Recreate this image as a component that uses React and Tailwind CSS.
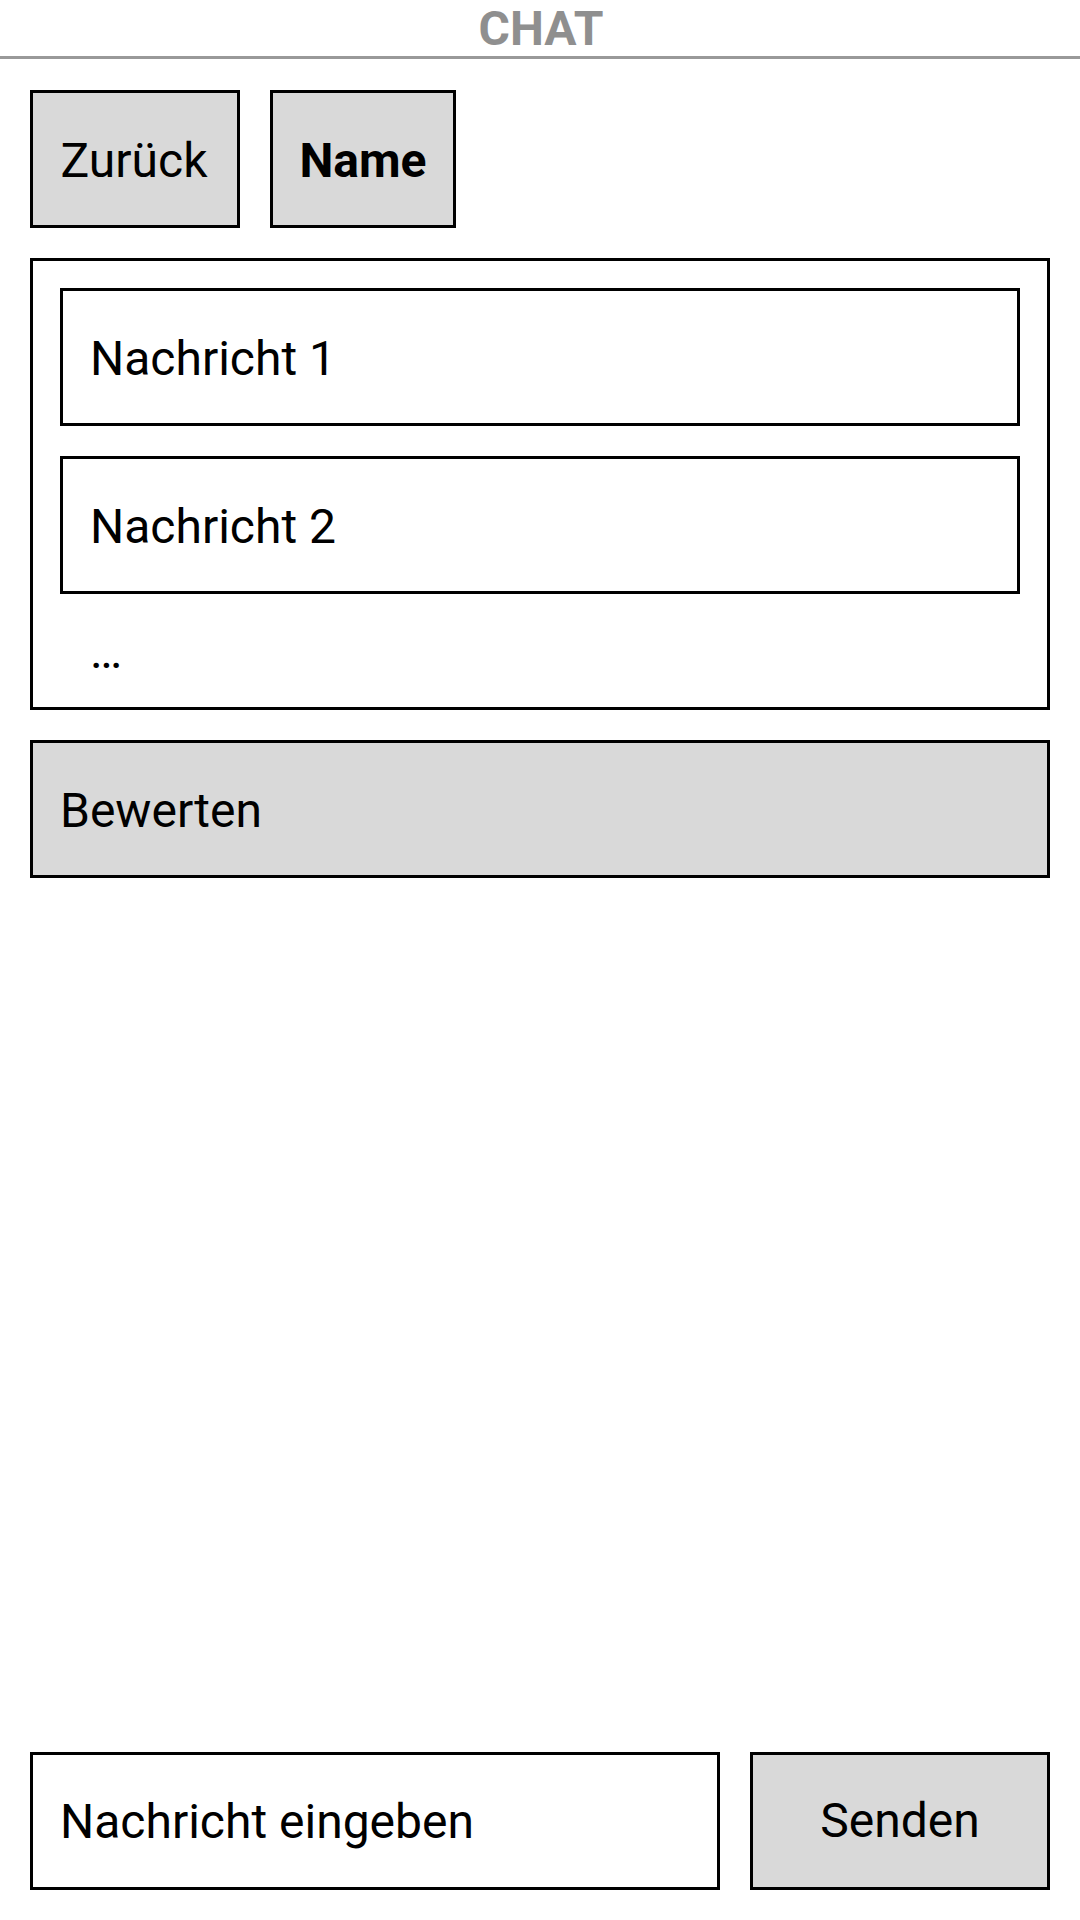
import React from "react";

export default function App() {
  return (
    <div className="w-[1080px] h-[1920px] bg-white flex flex-col font-['Roboto','Liberation_Sans',sans-serif] text-black">
      <header className="h-[59px] shrink-0 border-b-[3px] border-[#999999] flex justify-center">
        <span className="text-[48px] font-bold leading-[56px] pt-[1px] pl-[2px] text-[#8f8f8f]">CHAT</span>
      </header>
      <div className="flex flex-col flex-1 px-[30px] pt-[31px] pb-[30px]">
        <div className="flex gap-[30px]">
          <button className="h-[138px] w-[210px] border-[3px] border-black bg-[#d9d9d9] text-[48px] leading-[56px] pt-[4px] pr-[2px] flex items-center justify-center">
            Zurück
          </button>
          <button className="h-[138px] w-[186px] border-[3px] border-black bg-[#d9d9d9] text-[48px] leading-[56px] pt-[4px] font-bold flex items-center justify-center">
            Name
          </button>
        </div>
        <div className="mt-[30px] border-[3px] border-black p-[27px] flex flex-col gap-[30px]">
          <div className="h-[138px] border-[3px] border-black pl-[27px] pt-[4px] flex items-center text-[48px] leading-[56px]">
            Nachricht 1
          </div>
          <div className="h-[138px] border-[3px] border-black pl-[27px] pt-[4px] flex items-center text-[48px] leading-[56px]">
            Nachricht 2
          </div>
          <div className="h-[56px] pl-[30px] text-[48px] leading-[56px]">…</div>
        </div>
        <button className="mt-[30px] h-[138px] w-full border-[3px] border-black bg-[#d9d9d9] text-[48px] leading-[56px] pl-[27px] pt-[4px] flex items-center justify-start">
          Bewerten
        </button>
        <div className="mt-auto flex gap-[30px]">
          <input
            type="text"
            placeholder="Nachricht eingeben"
            className="h-[138px] w-[690px] border-[3px] border-black bg-white text-[48px] leading-[56px] pl-[27px] pt-[1px] outline-none placeholder:text-black"
          />
          <button className="h-[138px] w-[300px] border-[3px] border-black bg-[#d9d9d9] text-[48px] leading-[56px] flex items-center justify-center">
            Senden
          </button>
        </div>
      </div>
    </div>
  );
}
